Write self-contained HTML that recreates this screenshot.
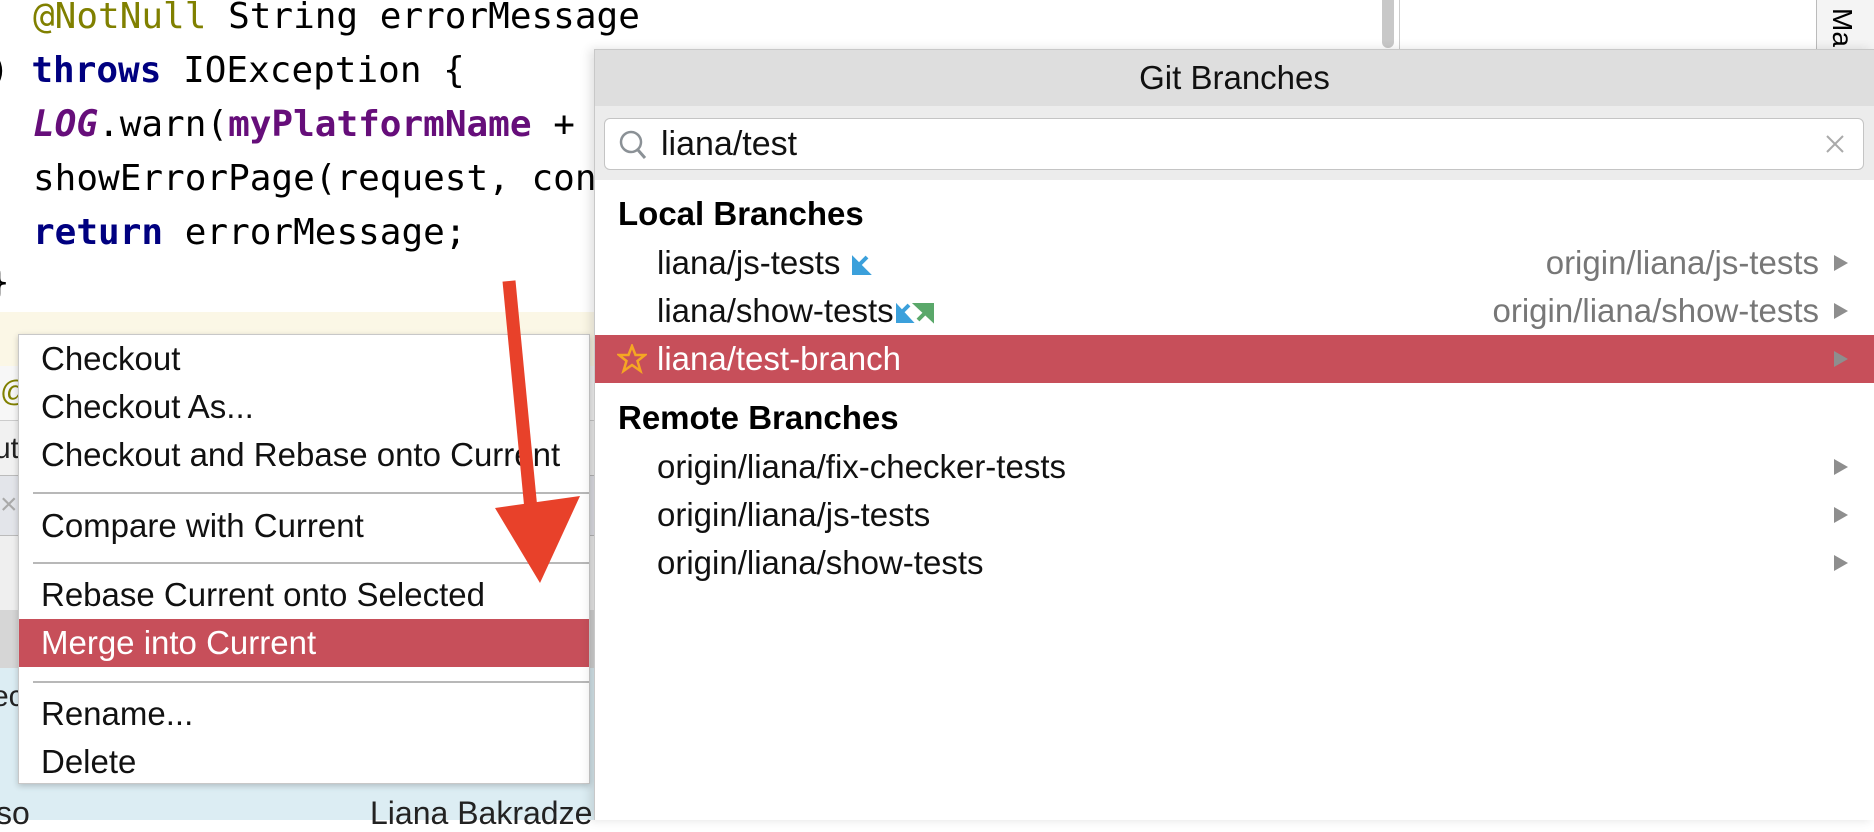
<!DOCTYPE html>
<html><head><meta charset="utf-8"><style>
*{margin:0;padding:0;box-sizing:border-box}
body{width:1874px;height:820px;overflow:hidden;background:#fff;position:relative;font-family:"Liberation Sans",sans-serif}
.abs{position:absolute}
.code{position:absolute;left:33px;font-family:"DejaVu Sans Mono","Liberation Mono",monospace;font-size:36px;color:#000;white-space:pre;line-height:40px}
.kw{color:#000080;font-weight:bold}
.ann{color:#808000}
.fld{color:#660e7a;font-weight:bold}
.mi{position:absolute;left:22px;font-size:33px;color:#111;line-height:48px;height:48px;white-space:nowrap}
.sep{position:absolute;left:14px;right:0;height:2px;background:#b8b8b8}
.br{position:absolute;left:0;right:0;height:48px;line-height:48px;font-size:33px;color:#111}
.br .n{position:absolute;left:62px;white-space:nowrap}
.br .n svg{vertical-align:middle}
.br .r{position:absolute;right:55px;color:#777}
.tri{position:absolute;right:26px;top:16px;width:0;height:0;border-left:14px solid #8e8e8e;border-top:8px solid transparent;border-bottom:8px solid transparent}
.hd{position:absolute;left:23px;font-size:33px;font-weight:bold;color:#000;line-height:48px}
</style></head><body>
<div class="code" style="top:-3px"><span class="ann">@NotNull</span> String errorMessage</div>
<div class="code" style="top:51px;left:-12px">) <span class="kw">throws</span> IOException {</div>
<div class="code" style="top:105px"><span class="fld" style="font-style:italic">LOG</span>.warn(<span class="fld">myPlatformName</span> + </div>
<div class="code" style="top:159px">showErrorPage(request, con</div>
<div class="code" style="top:213px"><span class="kw">return</span> errorMessage;</div>
<div class="code" style="top:263px;left:-12px">}</div>
<div class="abs" style="left:1382px;top:0;width:12px;height:48px;background:#c8c8c8;border-radius:0 0 6px 6px"></div>
<div class="abs" style="left:1399px;top:0;width:1px;height:50px;background:#ccc"></div>
<div class="abs" style="left:1816px;top:0;width:1px;height:50px;background:#bbb"></div>
<div class="abs" style="left:1817px;top:0;width:57px;height:50px;background:#f4f4f4"></div>
<div class="abs" style="top:8px;font-size:28px;transform:rotate(90deg);transform-origin:left top;left:1858px">Ma</div>
<div class="abs" style="left:0;top:312px;width:600px;height:54px;background:#fbf7e6"></div>
<div class="abs" style="left:0;top:366px;width:600px;height:54px;background:#f7f7f7"></div>
<div class="abs" style="left:0;top:375px;font-size:30px;color:#808000">@N</div>
<div class="abs" style="left:0;top:420px;width:600px;height:55px;background:#f1f1f1;border-top:1px solid #ccc"></div>
<div class="abs" style="left:-6px;top:432px;font-size:30px;color:#222">ut</div>
<div class="abs" style="left:0;top:475px;width:600px;height:60px;background:#e3e5ea;border-top:1px solid #bbb"></div>
<div class="abs" style="left:0;top:488px;font-size:30px;color:#aaa">×</div>
<div class="abs" style="left:0;top:535px;width:600px;height:75px;background:#efefef;border-top:1px solid #bbb"></div>
<div class="abs" style="left:0;top:610px;width:600px;height:58px;background:#d6d6d6"></div>
<div class="abs" style="left:0;top:668px;width:600px;height:152px;background:#dcedf3"></div>
<div class="abs" style="left:-8px;top:680px;font-size:30px;color:#222">ec</div>
<div class="abs" style="left:-4px;top:795px;font-size:32px;color:#222">so</div>
<div class="abs" style="left:370px;top:795px;font-size:32px;color:#222">Liana Bakradze</div>
<div class="abs" style="left:18px;top:334px;width:572px;height:450px;background:#fff;border:1px solid #c8c8c8;box-shadow:0 2px 6px rgba(0,0,0,.2)">
 <div class="mi" style="top:0">Checkout</div>
 <div class="mi" style="top:48px">Checkout As...</div>
 <div class="mi" style="top:96px">Checkout and Rebase onto Current</div>
 <div class="sep" style="top:157px"></div>
 <div class="mi" style="top:167px">Compare with Current</div>
 <div class="sep" style="top:227px"></div>
 <div class="mi" style="top:236px">Rebase Current onto Selected</div>
 <div class="abs" style="left:0;right:0;top:284px;height:48px;background:#c74f5a"></div>
 <div class="mi" style="top:284px;color:#fff">Merge into Current</div>
 <div class="sep" style="top:346px"></div>
 <div class="mi" style="top:355px">Rename...</div>
 <div class="mi" style="top:403px">Delete</div>
</div>
<svg class="abs" style="left:0;top:0" width="1874" height="820">
<line x1="509" y1="281" x2="532" y2="520" stroke="#e8412a" stroke-width="13"/>
<polygon points="495,508 580,496 540,583" fill="#e8412a"/>
</svg>
<div class="abs" style="left:594px;top:49px;width:1280px;height:771px;background:#fff;border-left:1px solid #c8c8c8;border-top:1px solid #c8c8c8;box-shadow:-4px 0 10px rgba(0,0,0,.12)">
 <div class="abs" style="left:0;right:0;top:0;height:56px;background:#dedede;text-align:center;font-size:33px;line-height:56px;color:#111">Git Branches</div>
 <div class="abs" style="left:0;right:0;top:56px;height:74px;background:#ececec"></div>
 <div class="abs" style="left:9px;right:10px;top:68px;height:52px;background:#fff;border:1px solid #c4c4c4;border-radius:6px">
  <svg class="abs" style="left:14px;top:10px" width="30" height="32"><circle cx="12" cy="13" r="10" fill="none" stroke="#8b9196" stroke-width="2.5"/><line x1="19" y1="21" x2="26" y2="29" stroke="#8b9196" stroke-width="3"/></svg>
  <div class="abs" style="left:56px;top:0;line-height:50px;font-size:34px;color:#111">liana/test</div>
  <svg class="abs" style="right:18px;top:15px" width="20" height="20"><path d="M2 2L18 18M18 2L2 18" stroke="#aaa" stroke-width="2"/></svg>
 </div>
 <div class="hd" style="top:140px">Local Branches</div>
 <div class="br" style="top:189px"><span class="n">liana/js-tests <svg width="22" height="24"><path d="M17 4L7 14M4 7v13h13z" stroke="#3ba0db" stroke-width="4" fill="#3ba0db"/></svg></span>
  <span class="r">origin/liana/js-tests</span><div class="tri"></div></div>
 <div class="br" style="top:237px"><span class="n">liana/show-tests<svg width="44" height="24"><path d="M15 4L6 13M4 7v13h12z" stroke="#3ba0db" stroke-width="4" fill="#3ba0db"/><path d="M24 19L33 10M23 4h15v14z" stroke="#5aa86a" stroke-width="4" fill="#5aa86a"/></svg></span>
  <span class="r">origin/liana/show-tests</span><div class="tri"></div></div>
 <div class="br" style="top:285px;background:#c74f5a;color:#fff">
  <svg class="abs" style="left:22px;top:9px" width="30" height="30"><polygon points="15,2 18.5,11 28,11 20.5,17 23.5,27 15,21 6.5,27 9.5,17 2,11 11.5,11" fill="none" stroke="#f5a623" stroke-width="2.5"/></svg>
  <span class="n">liana/test-branch</span><div class="tri"></div></div>
 <div class="hd" style="top:344px">Remote Branches</div>
 <div class="br" style="top:393px"><span class="n">origin/liana/fix-checker-tests</span><div class="tri"></div></div>
 <div class="br" style="top:441px"><span class="n">origin/liana/js-tests</span><div class="tri"></div></div>
 <div class="br" style="top:489px"><span class="n">origin/liana/show-tests</span><div class="tri"></div></div>
</div>
</body></html>
